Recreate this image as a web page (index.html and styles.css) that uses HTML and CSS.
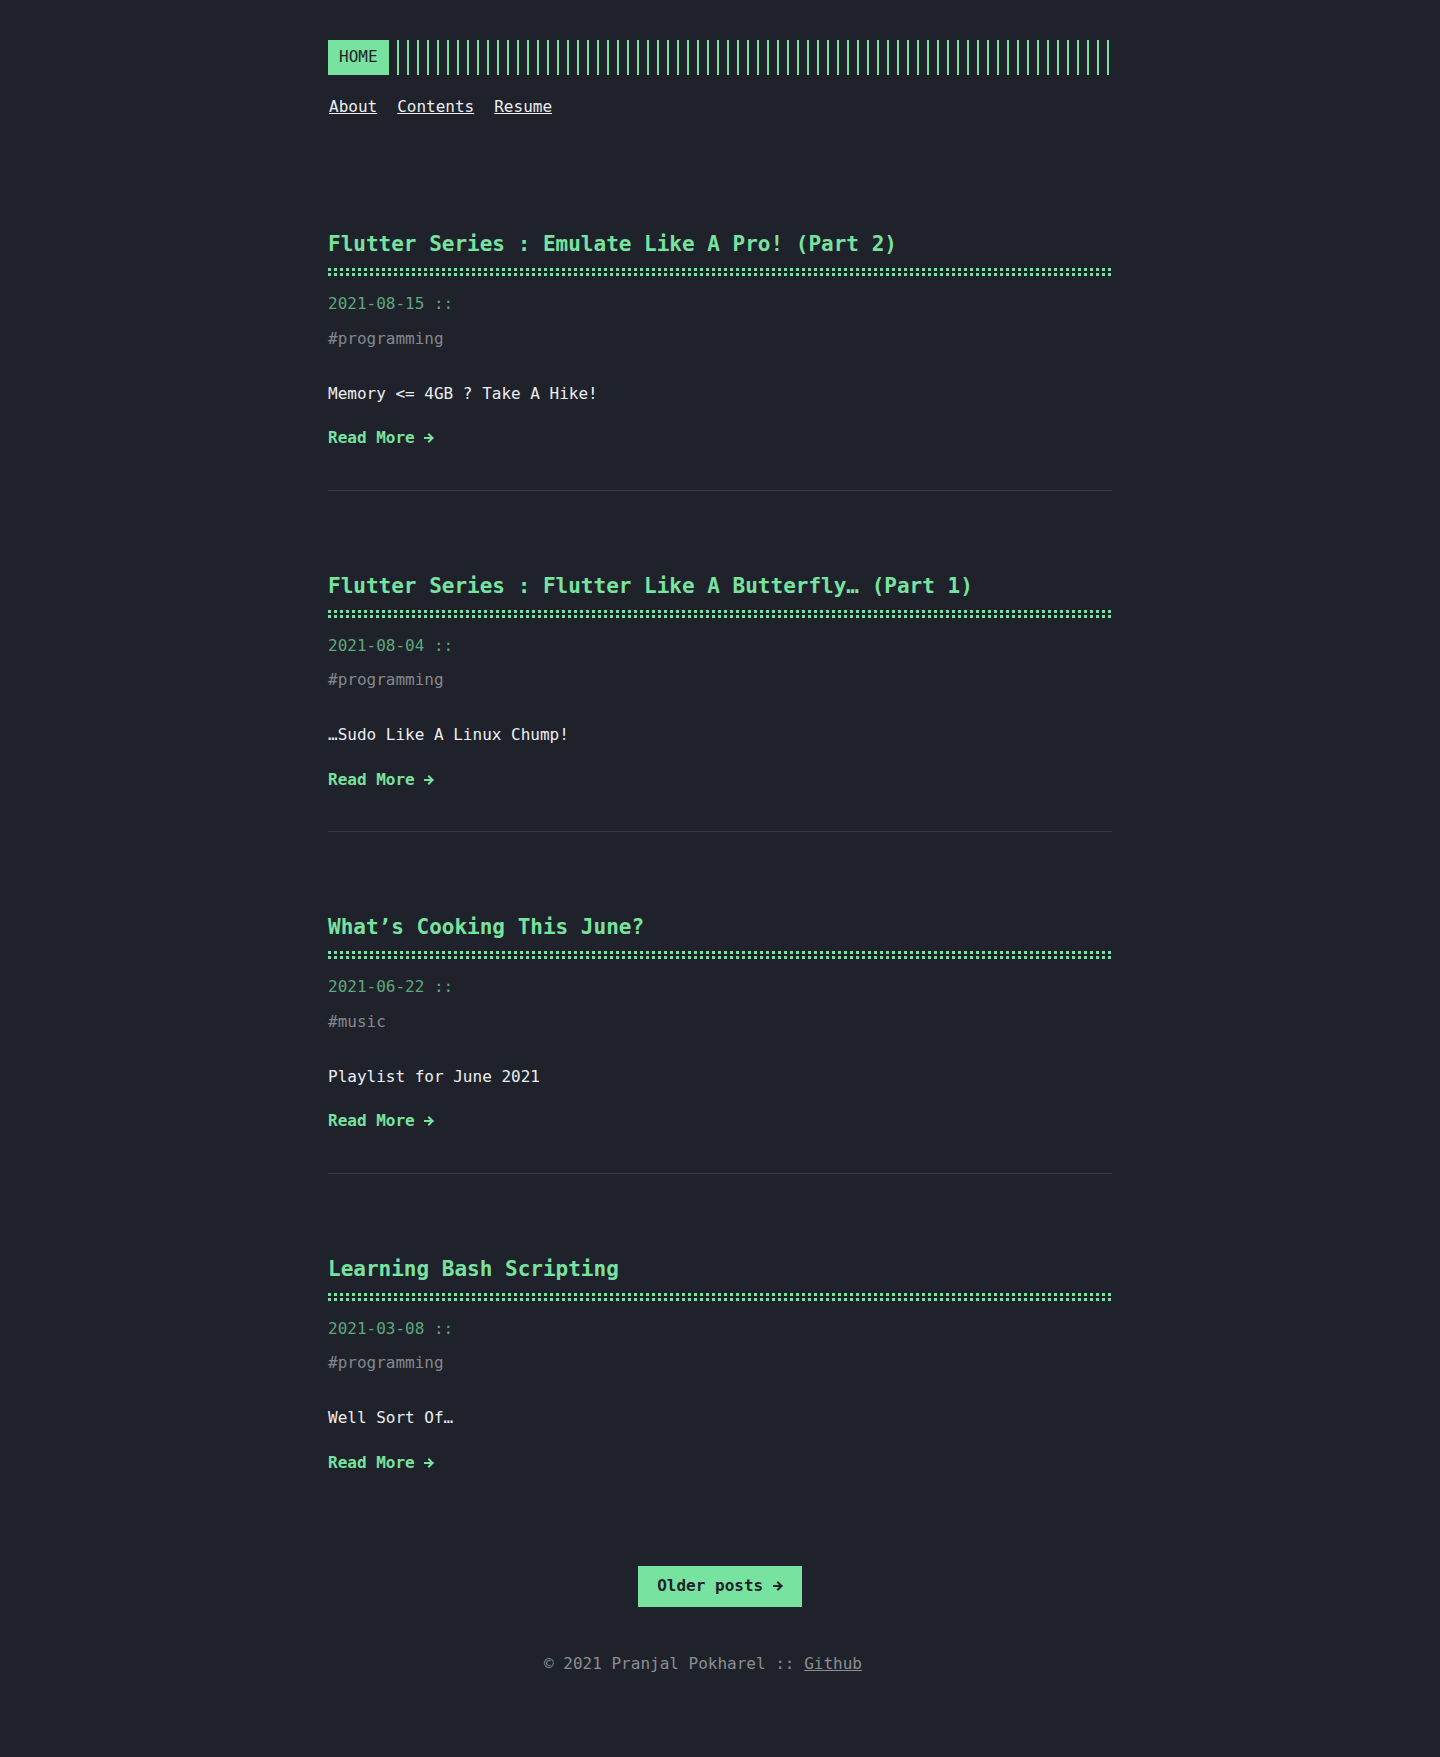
FILE: index.html
```html
<!DOCTYPE html>
<html lang="en">
<head>
<meta charset="utf-8">
<title>Pranjal Pokharel</title>
<link rel="stylesheet" href="styles.css">
</head>
<body>
<div class="container">
  <header class="header">
    <div class="header-logo">
      <a class="logo" href="#">HOME</a>
      <span class="stripes"></span>
    </div>
    <nav class="menu">
      <a href="#">About</a>
      <a href="#">Contents</a>
      <a href="#">Resume</a>
    </nav>
  </header>

  <main class="posts">
    <article class="post">
      <h2 class="post-title"><a href="#">Flutter Series : Emulate Like A Pro! (Part 2)</a></h2>
      <div class="post-meta">2021-08-15 ::</div>
      <div class="post-tags">#programming</div>
      <div class="post-content">Memory &lt;= 4GB ? Take A Hike!</div>
      <div class="read-more"><a href="#">Read More <svg class="arrow" viewBox="0 0 10 10" width="10" height="10"><path d="M1 5H8.5M5 1.5L8.5 5L5 8.5"/></svg></a></div>
    </article>
    <article class="post">
      <h2 class="post-title"><a href="#">Flutter Series : Flutter Like A Butterfly… (Part 1)</a></h2>
      <div class="post-meta">2021-08-04 ::</div>
      <div class="post-tags">#programming</div>
      <div class="post-content">…Sudo Like A Linux Chump!</div>
      <div class="read-more"><a href="#">Read More <svg class="arrow" viewBox="0 0 10 10" width="10" height="10"><path d="M1 5H8.5M5 1.5L8.5 5L5 8.5"/></svg></a></div>
    </article>
    <article class="post">
      <h2 class="post-title"><a href="#">What’s Cooking This June?</a></h2>
      <div class="post-meta">2021-06-22 ::</div>
      <div class="post-tags">#music</div>
      <div class="post-content">Playlist for June 2021</div>
      <div class="read-more"><a href="#">Read More <svg class="arrow" viewBox="0 0 10 10" width="10" height="10"><path d="M1 5H8.5M5 1.5L8.5 5L5 8.5"/></svg></a></div>
    </article>
    <article class="post">
      <h2 class="post-title"><a href="#">Learning Bash Scripting</a></h2>
      <div class="post-meta">2021-03-08 ::</div>
      <div class="post-tags">#programming</div>
      <div class="post-content">Well Sort Of…</div>
      <div class="read-more"><a href="#">Read More <svg class="arrow" viewBox="0 0 10 10" width="10" height="10"><path d="M1 5H8.5M5 1.5L8.5 5L5 8.5"/></svg></a></div>
    </article>
  </main>

  <div class="pagination">
    <a class="button" href="#">Older posts <svg class="arrow" viewBox="0 0 10 10" width="10" height="10"><path d="M1 5H8.5M5 1.5L8.5 5L5 8.5"/></svg></a>
  </div>

  <footer class="footer">
    <span class="copyright">© 2021 Pranjal Pokharel :: <a href="#">Github</a></span>
  </footer>
</div>
</body>
</html>
```
FILE: styles.css
```css
html, body {
  margin: 0;
  background: #1f222a;
}
body {
  color: #eceef2;
  font-family: "DejaVu Sans Mono", "Liberation Mono", monospace;
  font-size: 16px;
  line-height: 1.54;
}
a {
  color: inherit;
}
.container {
  max-width: 784px;
  margin: 0 auto;
  padding: 40px;
}

/* header */
.header-logo {
  display: flex;
}
.logo {
  display: block;
  background: #78e2a0;
  color: #1f222a;
  padding: 5px 11px;
  text-decoration: none;
}
.stripes {
  flex: 1;
  margin-left: 8px;
  background: repeating-linear-gradient(90deg, #78e2a0 0 2px, transparent 2px 10px);
}
.menu {
  display: flex;
  gap: 20px;
  margin-top: 20px;
  padding-left: 1px;
}
.menu a {
  color: #eceef2;
  text-decoration: underline;
}

/* posts */
.posts {
  margin-top: 70px;
}
.post {
  padding: 42px 0 39px;
}
.post + .post {
  margin-top: 40px;
}
.post:not(:last-child) {
  border-bottom: 1px solid #383b43;
}
.post-title {
  margin: 0 0 16px;
  font-size: 21px;
  line-height: 27px;
  font-weight: bold;
  color: #78e2a0;
}
.post-title a {
  color: #78e2a0;
  text-decoration: none;
}
.post-title::after {
  content: "";
  display: block;
  height: 8px;
  margin-top: 10px;
  background-image:
    repeating-linear-gradient(90deg, #78e2a0 0 3px, transparent 3px 6px),
    repeating-linear-gradient(90deg, #78e2a0 0 3px, transparent 3px 6px);
  background-size: 100% 3px, 100% 3px;
  background-position: 0 0, 0 5px;
  background-repeat: no-repeat;
}
.post-meta {
  color: #5da87d;
}
.post-tags {
  margin-top: 10px;
  color: #85878d;
}
.post-content {
  margin-top: 30px;
  color: #eceef2;
}
.read-more {
  margin-top: 20px;
}
.read-more a {
  color: #78e2a0;
  font-weight: bold;
  text-decoration: none;
}
.arrow {
  fill: none;
  stroke: currentColor;
  stroke-width: 2;
  stroke-linecap: square;
  vertical-align: 0;
}

/* pagination */
.pagination {
  margin-top: 52px;
  display: flex;
  justify-content: center;
}
.button {
  display: inline-block;
  background: #78e2a0;
  color: #1f222a;
  font-weight: bold;
  padding: 8px 19px;
  text-decoration: none;
}

/* footer */
.footer {
  margin-top: 45px;
  display: flex;
  justify-content: center;
  padding-right: 34px;
  color: #8b8d92;
}
.copyright a {
  color: #8b8d92;
  text-decoration: underline;
}
```
